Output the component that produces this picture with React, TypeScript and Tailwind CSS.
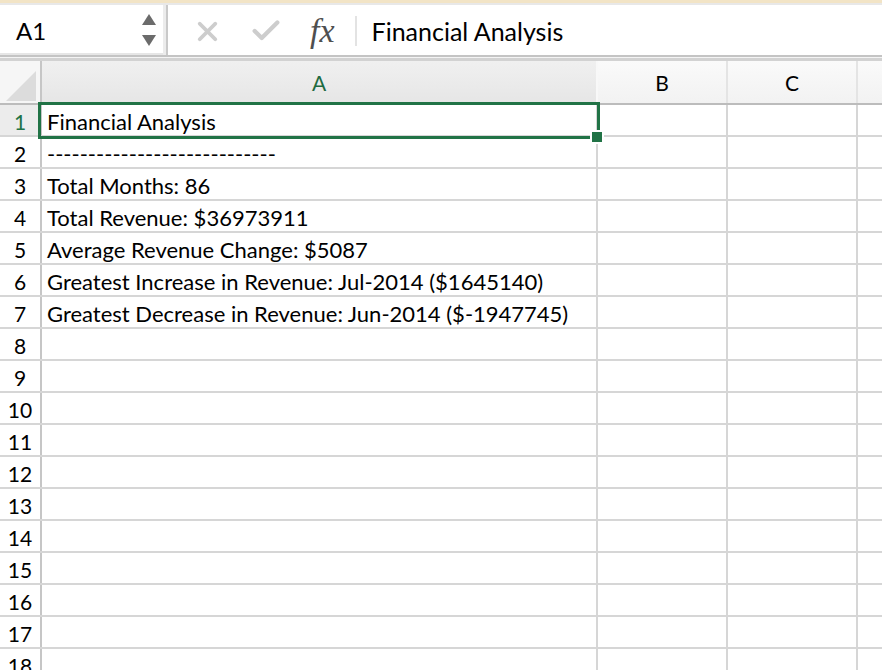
import { X, Check } from "lucide-react";

const rows = [
  "Financial Analysis",
  "----------------------------",
  "Total Months: 86",
  "Total Revenue: $36973911",
  "Average Revenue Change: $5087",
  "Greatest Increase in Revenue: Jul-2014 ($1645140)",
  "Greatest Decrease in Revenue: Jun-2014 ($-1947745)",
];

const font = { fontFamily: "Lato, 'Open Sans', sans-serif" };

const FormulaBar = () => (
  <div className="flex h-[50px] shrink-0 bg-white">
    {/* Name box */}
    <div className="flex w-[163px] items-center justify-between border-b-2 border-[#e6e6e6] pl-4 pr-[7px]">
      <span className="pt-[4px] text-[24px] text-black" style={font}>
        A1
      </span>
      <div className="flex flex-col gap-[10px] pt-[2px]">
        <svg width="14" height="11" viewBox="0 0 14 11">
          <path d="M7 0 L14 11 L0 11 Z" fill="#6b6b6b" />
        </svg>
        <svg width="14" height="11" viewBox="0 0 14 11">
          <path d="M0 0 L14 0 L7 11 Z" fill="#6b6b6b" />
        </svg>
      </div>
    </div>
    <div className="w-[3px] bg-[#ececec]" />
    <div className="w-[2px] bg-[#c9c9c9]" />
    {/* Cancel / enter / fx */}
    <div className="flex items-center pt-[2px]">
      <X className="ml-[24px] h-[31px] w-[31px] text-[#cdcdcd]" strokeWidth={3} />
      <Check className="ml-[26px] h-[34px] w-[34px] text-[#cdcdcd]" strokeWidth={3} />
      <span
        className="ml-[27px] text-[34px] italic leading-none text-[#4f4f4f]"
        style={{ fontFamily: "'Liberation Serif', 'DejaVu Serif', serif" }}
      >
        fx
      </span>
      <div className="ml-[20px] h-[30px] w-[2px] bg-[#e3e3e3]" />
      <span className="ml-[15px] pt-[2px] text-[25px] text-black" style={font}>
        Financial Analysis
      </span>
    </div>
  </div>
);

const HeaderRow = () => (
  <div className="flex h-[44px] shrink-0 border-b-2 border-[#bcbcbc]">
    <div className="relative w-[40px] bg-[#f6f6f6]">
      <svg className="absolute left-[6px] top-[10px]" width="30" height="30" viewBox="0 0 30 30">
        <path d="M30 0 L30 30 L0 30 Z" fill="#dcdcdc" />
      </svg>
    </div>
    <div className="w-[2px] bg-[#c6c6c6]" />
    <div className="flex w-[554px] items-center justify-center bg-gradient-to-b from-[#f0f0f0] to-[#e6e6e6] pt-[2px] text-[21px] text-[#1e6b41]" style={font}>
      A
    </div>
    <div className="w-[2px] bg-[#f8f8f8]" />
    <div className="flex w-[128px] items-center justify-center bg-gradient-to-b from-[#fafafa] to-[#f2f2f2] pt-[2px] text-[21px] text-black" style={font}>
      B
    </div>
    <div className="w-[2px] bg-[#e4e4e4]" />
    <div className="flex w-[128px] items-center justify-center bg-gradient-to-b from-[#fafafa] to-[#f2f2f2] pt-[2px] text-[21px] text-black" style={font}>
      C
    </div>
    <div className="w-[2px] bg-[#e4e4e4]" />
    <div className="flex-1 bg-gradient-to-b from-[#fafafa] to-[#f2f2f2]" />
  </div>
);

const GridRow = ({ n, text }: { n: number; text: string }) => {
  const selected = n === 1;
  return (
    <div className="flex h-[32px] shrink-0 border-b-2 border-[#d6d6d6]">
      <div
        className={`flex w-[40px] items-center justify-center pt-[3px] text-[21px] ${
          selected ? "bg-[#ececec] text-[#217346]" : "bg-white text-black"
        }`}
        style={font}
      >
        {n}
      </div>
      <div className="w-[2px] bg-[#c6c6c6]" />
      <div className="relative flex w-[554px] items-center pl-[5px] pt-[3px] text-[22px] text-black" style={font}>
        <span className="whitespace-nowrap">{text}</span>
        {selected && (
          <>
            <div className="pointer-events-none absolute left-[-4px] top-[-3px] h-[37px] w-[562px] border-[3px] border-[#217346]" />
            <div className="absolute left-[548px] top-[25px] h-[14px] w-[14px] bg-white" />
            <div className="absolute left-[550px] top-[27px] h-[10px] w-[10px] bg-[#217346]" />
          </>
        )}
      </div>
      <div className="w-[2px] bg-[#d6d6d6]" />
      <div className="w-[128px]" />
      <div className="w-[2px] bg-[#d6d6d6]" />
      <div className="w-[128px]" />
      <div className="w-[2px] bg-[#d6d6d6]" />
      <div className="flex-1" />
    </div>
  );
};

export default function App() {
  return (
    <div className="flex h-[670px] w-[882px] flex-col overflow-hidden bg-white">
      <div className="h-[3px] shrink-0 bg-[#f2e4c6]" />
      <div className="h-[2px] shrink-0 bg-[#e8e8e8]" />
      <FormulaBar />
      <div className="h-[2px] shrink-0 bg-[#c4c4c4]" />
      <div className="h-[1px] shrink-0 bg-[#f4f4f4]" />
      <div className="h-[3px] shrink-0 bg-[#d2d2d2]" />
      <HeaderRow />
      <div className="flex shrink-0 flex-col">
        {Array.from({ length: 18 }, (_, i) => (
          <GridRow key={i} n={i + 1} text={rows[i] ?? ""} />
        ))}
      </div>
    </div>
  );
}
